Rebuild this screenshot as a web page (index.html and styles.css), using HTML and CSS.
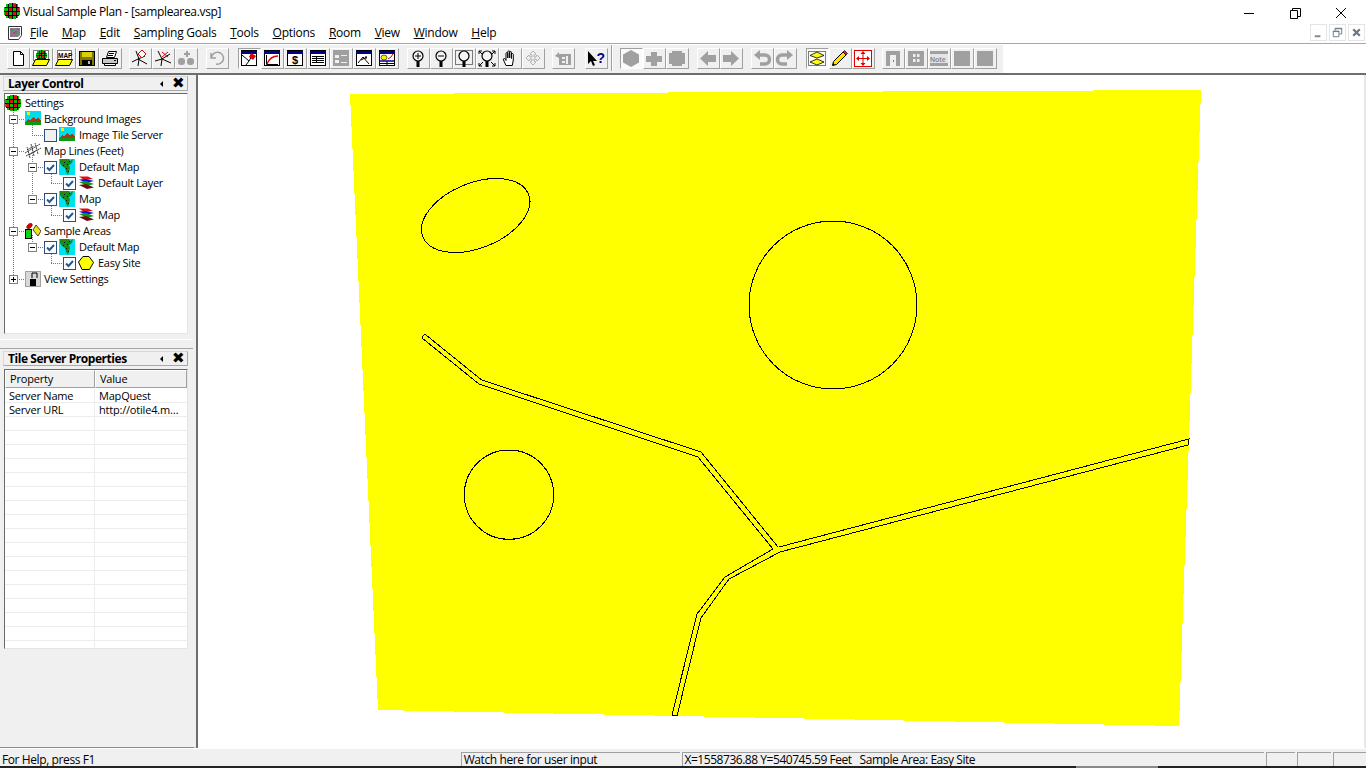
FILE: index.html
```html
<!DOCTYPE html>
<html lang="en">
<head>
<meta charset="utf-8">
<title>Visual Sample Plan - [samplearea.vsp]</title>
<link rel="stylesheet" href="styles.css">
</head>
<body>
<svg class="defs" width="0" height="0" aria-hidden="true">
  <defs>
    <symbol id="grid" viewBox="0 0 16 16">
      <g shape-rendering="crispEdges">
      <path fill="#00c000" d="M5 0h7v1h2v3h2v8h-2v3h-2v1H5v-1H2v-3H0V4h2V1h3z"/>
      <path fill="#e01010" d="M9 1h3v3H9zM5 5h3v3H5zM9 9h3v3H9zM13 5h2v3h-2zM1 9h3v3H1zM5 13h3v2H5z"/>
      <path fill="none" stroke="#000" d="M4.500 1v14M8.500 0v16M12.500 1v14M1 4.500h14M0 8.500h16M1 12.500h14"/>
      </g>
    </symbol>
    <symbol id="bg" viewBox="0 0 16 16">
      <g shape-rendering="crispEdges">
      <rect width="16" height="14" fill="#00dcec"/>
      <rect x="2" y="1" width="3" height="3" fill="#ffe800"/>
      <path fill="#a03a18" d="M0 11l3-3 2 1 3-3 3 2 2-1 3 3v2H0z"/>
      <rect y="11" width="16" height="3" fill="#0a9a10"/>
      </g>
    </symbol>
    <symbol id="lines" viewBox="0 0 16 16">
      <path fill="none" stroke="#111" stroke-width=".8" stroke-dasharray="2 .6" d="M0 10L15 1M1 13L16 5M5 15L2 4M9 13L6 1M13 11L10 0M2 7l7-4M4 12l7-4"/>
    </symbol>
    <symbol id="land" viewBox="0 0 16 16">
      <rect width="16" height="16" fill="#00e0f0"/>
      <path fill="#1a8a1a" d="M1 0h9l1 2 3-2-1 4-3 2 1 3-1 3-1 4-2-3-1-4-3-2-2-3z"/>
      <path fill="#000" d="M5 3h1v1H5zM8 5h1v1H8zM7 9h1v1H7zM4 6h1v1H4zM10 2h1v1h-1zM9 12h1v1H9z"/>
    </symbol>
    <symbol id="layers" viewBox="0 0 16 16">
      <path fill="#e01010" d="M1 1.500L10 1.500L15 4L6 5z"/>
      <path fill="#1010e0" d="M1 4.500L8 4L16 6L8 8z"/>
      <path fill="#0a9a1a" d="M1 7L8 6L16 9L9 11z"/>
      <path fill="#6e0c0c" d="M1 10L8 9L16 12.500L9 14z"/>
    </symbol>
    <symbol id="areas" viewBox="0 0 16 16">
      <ellipse cx="4.500" cy="3" rx="3.300" ry="2" transform="rotate(-45 4.500 3)" fill="#e00000" stroke="#700" stroke-width=".6"/>
      <rect x=".5" y="6.500" width="6" height="9" fill="#10d010" stroke="#000"/>
      <path d="M11 2l5 6-3 5-5-6z" fill="#f0e020" stroke="#000" stroke-width=".7"/>
    </symbol>
    <symbol id="pent" viewBox="0 0 16 16">
      <path d="M5 1.500h6l4.500 6-4 7H4L.5 7z" fill="#ffff00" stroke="#000"/>
    </symbol>
    <symbol id="view" viewBox="0 0 16 16">
      <rect x=".5" y=".5" width="15" height="15" fill="#d8d8d8" stroke="#555" stroke-dasharray="1 1"/>
      <path fill="#000" d="M5 8h6v7H5z"/>
      <path fill="none" stroke="#000" d="M7 7V2h5v5"/>
    </symbol>
    <symbol id="check" viewBox="0 0 13 13">
      <rect x=".5" y=".5" width="12" height="12" fill="#fff" stroke="#2a4f78"/>
      <path d="M3 6.500l2.500 2.500L10 4" fill="none" stroke="#1f5a96" stroke-width="2"/>
    </symbol>
    <symbol id="uncheck" viewBox="0 0 13 13">
      <rect x=".5" y=".5" width="12" height="12" fill="#f0f0f0" stroke="#2a4f78"/>
    </symbol>
    <symbol id="win" viewBox="0 0 18 17">
      <rect x="1.500" y=".5" width="15" height="15" fill="#fff" stroke="#000"/>
      <rect x="1" y="1" width="16" height="3" fill="#00008c"/>
    </symbol>
    <symbol id="mag" viewBox="0 0 18 17">
      <circle cx="9" cy="6" r="5" fill="#f4f4f4" stroke="#000" stroke-width="1.200"/>
      <rect x="7.500" y="11" width="3" height="6" fill="#000"/>
    </symbol>
  </defs>
</svg>

<header class="titlebar">
  <svg class="appicon"><use href="#grid"/></svg>
  <span class="apptitle">Visual Sample Plan - [samplearea.vsp]</span>
  <div class="caption">
    <svg class="capbtn" viewBox="0 0 46 16"><path d="M18 10.500h10" stroke="#000" fill="none"/></svg>
    <svg class="capbtn" viewBox="0 0 46 16"><path d="M18.500 7.500h7v8h-7zM20.500 7V5.500h8v8H26" stroke="#000" fill="none"/></svg>
    <svg class="capbtn" viewBox="0 0 46 16"><path d="M18 5l10 10M28 5L18 15" stroke="#000" fill="none"/></svg>
  </div>
</header>

<nav class="menubar">
  <svg class="docicon" viewBox="0 0 16 16">
    <path d="M1.500 1.500h13v9l-3 4h-10z" fill="#fff" stroke="#333"/>
    <path d="M3 3h10v7l-2 2H3z" fill="#8a7a90"/>
    <path d="M4 4h2v2H4zM8 6h2v2H8zM10 4h2v1h-2z" fill="#20a040"/>
    <path d="M6 7h2v2H6zM4 9h1v1H4z" fill="#d04060"/>
  </svg>
  <ul class="menus">
    <li><u>F</u>ile</li>
    <li><u>M</u>ap</li>
    <li><u>E</u>dit</li>
    <li><u>S</u>ampling Goals</li>
    <li><u>T</u>ools</li>
    <li><u>O</u>ptions</li>
    <li><u>R</u>oom</li>
    <li><u>V</u>iew</li>
    <li><u>W</u>indow</li>
    <li><u>H</u>elp</li>
  </ul>
  <div class="mdi">
    <svg class="mdibtn" viewBox="0 0 16 16"><path d="M4 11h6v2H4z" fill="#7a8694"/></svg>
    <svg class="mdibtn" viewBox="0 0 16 16"><path d="M3.500 6.500h6v6h-6zM5.500 6V3.500h7v6H10M3 7h7M5 4h8" fill="none" stroke="#6a7684"/></svg>
    <svg class="mdibtn" viewBox="0 0 16 16"><path d="M4.500 4.500l7 7M11.500 4.500l-7 7" stroke="#6a7684" stroke-width="2.400" fill="none"/></svg>
  </div>
</nav>

<div class="toolrow">
  <div class="toolbar">
    <div class="tgroup">
      <span class="tb"><svg class="ti" viewBox="0 0 18 17"><path d="M4.500 1.500h7l3 3v11h-10z" fill="#fff" stroke="#000"/><path d="M11.500 1.500v3h3" fill="none" stroke="#000"/></svg></span>
      <span class="tb"><svg class="ti" viewBox="0 0 18 17"><rect x="1.500" y=".5" width="15" height="10" fill="#fff" stroke="#000" stroke-dasharray="1 1"/><use href="#grid" x="4" y="0" width="11" height="11"/><path d="M.5 15.500l3-6h14l-3 6z" fill="#ffff00" stroke="#000"/></svg></span>
      <span class="tb"><svg class="ti" viewBox="0 0 18 17"><rect x="2.500" y=".5" width="14" height="9" fill="#fff" stroke="#000" stroke-dasharray="1 1"/><text x="3" y="8" class="icotext">MAP</text><path d="M.5 15.500l3-6h14l-3 6z" fill="#ffff00" stroke="#000"/></svg></span>
      <span class="tb"><svg class="ti" viewBox="0 0 18 17"><rect x="1.500" y="1.500" width="15" height="14" fill="#807800" stroke="#000"/><rect x="4" y="2" width="10" height="5" fill="#d8d000"/><rect x="4" y="10" width="10" height="5" fill="#000"/><rect x="10" y="11" width="2" height="3" fill="#bbb"/></svg></span>
      <span class="tb"><svg class="ti" viewBox="0 0 18 17"><path d="M5.500 7.500l2-6h8l-2 6z" fill="#fff" stroke="#000"/><path d="M1.500 8.500h15v5h-15z" fill="#c8c8c8" stroke="#000"/><path d="M3.500 13.500h11v2h-11z" fill="#fff" stroke="#000"/><path d="M8 3.500h5M7 5.500h5" stroke="#000"/><rect x="13" y="10" width="2" height="1" fill="#000"/></svg></span>
    </div>
    <div class="tgroup g7">
      <span class="tb"><svg class="ti" viewBox="0 0 18 17"><path d="M1 12l6-3 9 5M5 1l3 8-1 7M7 9l7-3" fill="none" stroke="#000"/><path d="M11 0l4 4-4 4-4-4z" fill="#fff" stroke="#e00000"/></svg></span>
      <span class="tb"><svg class="ti" viewBox="0 0 18 17"><path d="M1 11l7-2 9 4M4 1l4 8-1 7M8 9l8-5" fill="none" stroke="#000"/><path d="M8 2l6 5M14 2L8 7" fill="none" stroke="#e00000"/></svg></span>
      <span class="tb"><svg class="ti" viewBox="0 0 18 17"><rect x="1" y="8" width="7" height="7" rx="3" fill="#a0a0a0"/><rect x="10" y="8" width="7" height="7" rx="3" fill="#a0a0a0"/><path d="M7 3h2V1h2v2h2v2h-2v2H9V5H7z" fill="#a0a0a0"/></svg></span>
    </div>
    <div class="tgroup g8">
      <span class="tb"><svg class="ti" viewBox="0 0 18 17"><path d="M3 3v5h5M3.500 8A6 6 0 1 1 8 14" fill="none" stroke="#a0a0a0" stroke-width="1.500"/></svg></span>
    </div>
    <div class="tgroup g9">
      <span class="tb pressed"><svg class="ti" viewBox="0 0 18 17"><use href="#win"/><path d="M2 5l7 6-3 4M9 11l3-5" fill="none" stroke="#000"/><path d="M11 3l5 3-3 4-4-3z" fill="#e00000"/></svg></span>
      <span class="tb"><svg class="ti" viewBox="0 0 18 17"><use href="#win"/><path d="M3.500 5v9.500H15" fill="none" stroke="#000"/><path d="M4 14C6 9 10 6 15 6" fill="none" stroke="#e00000" stroke-width="1.300"/></svg></span>
      <span class="tb"><svg class="ti" viewBox="0 0 18 17"><use href="#win"/><text x="9" y="14" class="icotext dollar">$</text></svg></span>
      <span class="tb"><svg class="ti" viewBox="0 0 18 17"><use href="#win"/><path d="M3 6.500h12M3 8.500h12M3 10.500h12M3 12.500h12M7.500 6v7" fill="none" stroke="#000"/></svg></span>
      <span class="tb"><svg class="ti" viewBox="0 0 18 17"><rect x="1" y="0" width="16" height="16" fill="#a0a0a0"/><path d="M3 5h4v3H3zM3 10h4v3H3zM9 5h6v1H9zM9 12h6v1H9z" fill="#f0f0f0"/></svg></span>
      <span class="tb"><svg class="ti" viewBox="0 0 18 17"><use href="#win"/><path d="M3 13l5-6 6 7M6 10l6-3M11 6v3" fill="none" stroke="#000"/></svg></span>
      <span class="tb"><svg class="ti" viewBox="0 0 18 17"><use href="#win"/><ellipse cx="6" cy="7.500" rx="3" ry="2.500" fill="#ffee00" stroke="#000" stroke-width=".6"/><path d="M10 9l3-2 2-3" stroke="#e00000" fill="none"/><path d="M2 11h14" stroke="#00008c" stroke-width="1.500"/><path d="M2 13.500h14M9 11v4" stroke="#000"/></svg></span>
    </div>
    <div class="tgroup g8">
      <span class="tb"><svg class="ti" viewBox="0 0 18 17"><use href="#mag"/><path d="M6 6h6M9 3v6" stroke="#000"/></svg></span>
      <span class="tb"><svg class="ti" viewBox="0 0 18 17"><use href="#mag"/><path d="M6 6h6" stroke="#000"/></svg></span>
      <span class="tb"><svg class="ti" viewBox="0 0 18 17"><rect x=".5" y=".5" width="17" height="14" fill="none" stroke="#000" stroke-dasharray="1 1"/><use href="#mag"/></svg></span>
      <span class="tb"><svg class="ti" viewBox="0 0 18 17"><use href="#mag"/><path d="M1 1l3 3M1 1h3M1 1v3M17 1l-3 3M17 1h-3M17 1v3M1 16l4-4M1 16h3M1 16v-3M17 16l-4-4M17 16h-3M17 16v-3" fill="none" stroke="#000"/></svg></span>
      <span class="tb"><svg class="ti" viewBox="0 0 18 17"><path d="M5 15.500L2.500 10c-.7-1.500 1-2 1.700-.8L5 10.500V3.500c0-1.300 1.800-1.300 1.800 0V8V1.800c0-1.300 1.900-1.300 1.900 0V8V2.500c0-1.300 1.800-1.300 1.800 0V8.500V4.500c0-1.200 1.800-1.200 1.800 0V10l-1 5.500z" fill="#fff" stroke="#000"/></svg></span>
      <span class="tb"><svg class="ti" viewBox="0 0 18 17"><path d="M9 1l3 3-2 1v2h2l1-2 3 3-3 3-1-2h-2v2l2 1-3 3-3-3 2-1v-2H6l-1 2-3-3 3-3 1 2h2V5L6 4z" fill="none" stroke="#b0b0b0"/></svg></span>
    </div>
    <div class="tgroup g7">
      <span class="tb"><svg class="ti" viewBox="0 0 18 17"><path d="M1 6l4-4v2h12v11H5V8z" fill="#a0a0a0"/><path d="M8 7h3v2H8zM12 6h2v8h-2zM8 11h3v2H8z" fill="#f0f0f0"/></svg></span>
    </div>
    <div class="tgroup g10">
      <span class="tb"><svg class="ti" viewBox="0 0 18 17"><path d="M1 1v13l3-3 2 5 2-1-2-4h4z" fill="#000"/><text x="9.500" y="13" class="icotext help">?</text></svg></span>
    </div>
    <i class="tsep"></i>
    <div class="tgroup">
      <span class="tb pressed"><svg class="ti" viewBox="0 0 18 17"><path d="M9 0l8 4.500v8L9 17l-8-4.500v-8z" fill="#a0a0a0"/></svg></span>
      <span class="tb"><svg class="ti" viewBox="0 0 18 17"><path d="M6 2h6v4h5v6h-5v4H6v-4H1V6h5z" fill="#a0a0a0"/></svg></span>
      <span class="tb"><svg class="ti" viewBox="0 0 18 17"><path d="M4 1h10v2h3v11h-3v2H4v-2H1V3h3z" fill="#a0a0a0"/></svg></span>
    </div>
    <div class="tgroup g8">
      <span class="tb"><svg class="ti" viewBox="0 0 18 17"><path d="M1 8.500L9 1v4h8v7H9v4z" fill="#a0a0a0"/></svg></span>
      <span class="tb"><svg class="ti" viewBox="0 0 18 17"><path d="M17 8.500L9 1v4H1v7h8v4z" fill="#a0a0a0"/></svg></span>
    </div>
    <div class="tgroup g8">
      <span class="tb"><svg class="ti" viewBox="0 0 18 17"><path d="M5 5h7a4 4 0 0 1 0 9H7" fill="none" stroke="#a0a0a0" stroke-width="3.500"/><path d="M1 5l6-5v10z" fill="#a0a0a0"/></svg></span>
      <span class="tb"><svg class="ti" viewBox="0 0 18 17"><path d="M13 5H6a4 4 0 0 0 0 9h5" fill="none" stroke="#a0a0a0" stroke-width="3.500"/><path d="M17 5l-6-5v10z" fill="#a0a0a0"/></svg></span>
    </div>
    <div class="tgroup g9">
      <span class="tb pressed"><svg class="ti" viewBox="0 0 18 17"><rect x=".5" y="1.500" width="17" height="14" fill="none" stroke="#000" stroke-dasharray="1 1"/><path d="M9 2l7 3.500L9 8 2 5.500z" fill="#ffff00" stroke="#000" stroke-width=".8"/><path d="M9 9l7 3-7 3-7-3z" fill="#ffff00" stroke="#000" stroke-width=".8"/></svg></span>
      <span class="tb"><svg class="ti" viewBox="0 0 18 17"><path d="M1.500 15.500l1-4L12 2l3 3-9.500 9.500z" fill="#ffe000" stroke="#000"/><path d="M12 2l1.500-1.500 3 3L15 5z" fill="#e02050" stroke="#000" stroke-width=".7"/><path d="M1.500 15.500l.7-2.500 1.800 1.800z" fill="#000"/></svg></span>
      <span class="tb"><svg class="ti" viewBox="0 0 18 17"><rect x=".5" y=".5" width="17" height="16" fill="#fff" stroke="#e00000"/><path d="M9 3v11M3.500 8.500h11" stroke="#e00000" fill="none"/><path d="M9 1l2.500 3h-5zM9 16l-2.500-3h5zM2 8.500l3-2.500v5zM16 8.500L13 6v5z" fill="#e00000"/></svg></span>
    </div>
    <div class="tgroup g7">
      <span class="tb"><svg class="ti" viewBox="0 0 18 17"><path d="M2 1h14v15h-4V5H6v11H2z" fill="#a0a0a0"/><rect x="9" y="10" width="1" height="2" fill="#777"/></svg></span>
      <span class="tb"><svg class="ti" viewBox="0 0 18 17"><path d="M1 1h16v15H1z" fill="#a0a0a0"/><path d="M6 4h2.500v3H6zM10 4h2.500v3H10zM6 9h2.500v3H6zM10 9h2.500v3H10z" fill="#f0f0f0"/></svg></span>
      <span class="tb"><svg class="ti" viewBox="0 0 18 17"><path d="M0 1h18v15H0z" fill="#a0a0a0"/><rect y="4" width="18" height="9" fill="#e4e4e4"/><text x="0" y="11.500" class="icotext note">Note</text></svg></span>
      <span class="tb"><svg class="ti" viewBox="0 0 18 17"><path d="M1 1h16v15H1z" fill="#a0a0a0"/></svg></span>
      <span class="tb"><svg class="ti" viewBox="0 0 18 17"><path d="M1 1h16v15H1z" fill="#a0a0a0"/></svg></span>
    </div>
  </div>
</div>

<main class="workspace">
  <aside class="side">
    <section class="pane">
      <div class="panetitle"><span>Layer Control</span><i class="arrow"></i><b class="closex">✖</b></div>
      <div class="tree">
        <svg class="dots" width="182" height="238" viewBox="5 94 182 238">
          <path d="M13.500 108V275M17 119.500h8M17 151.500h8M17 231.500h8M17 279.500h8M32.500 123v12M32 135.500h12M32.500 155v44M36 167.500h8M36 199.500h8M32.500 235v12M36 247.500h8M51.500 172v11M51 183.500h12M51.500 204v11M51 215.500h12M51.500 252v11M51 263.500h12" fill="none" stroke="#777" stroke-dasharray="1 1"/>
        </svg>
        <div class="row lv0"><svg class="ic"><use href="#grid"/></svg><span class="lbl">Settings</span></div>
        <div class="row lv1"><i class="exp"></i><svg class="ic"><use href="#bg"/></svg><span class="lbl">Background Images</span></div>
        <div class="row lv2"><i class="exp none"></i><svg class="cb"><use href="#uncheck"/></svg><svg class="ic"><use href="#bg"/></svg><span class="lbl">Image Tile Server</span></div>
        <div class="row lv1"><i class="exp"></i><svg class="ic"><use href="#lines"/></svg><span class="lbl">Map Lines (Feet)</span></div>
        <div class="row lv2"><i class="exp"></i><svg class="cb"><use href="#check"/></svg><svg class="ic"><use href="#land"/></svg><span class="lbl">Default Map</span></div>
        <div class="row lv3"><svg class="cb"><use href="#check"/></svg><svg class="ic"><use href="#layers"/></svg><span class="lbl">Default Layer</span></div>
        <div class="row lv2"><i class="exp"></i><svg class="cb"><use href="#check"/></svg><svg class="ic"><use href="#land"/></svg><span class="lbl">Map</span></div>
        <div class="row lv3"><svg class="cb"><use href="#check"/></svg><svg class="ic"><use href="#layers"/></svg><span class="lbl">Map</span></div>
        <div class="row lv1"><i class="exp"></i><svg class="ic"><use href="#areas"/></svg><span class="lbl">Sample Areas</span></div>
        <div class="row lv2"><i class="exp"></i><svg class="cb"><use href="#check"/></svg><svg class="ic"><use href="#land"/></svg><span class="lbl">Default Map</span></div>
        <div class="row lv3"><svg class="cb"><use href="#check"/></svg><svg class="ic"><use href="#pent"/></svg><span class="lbl">Easy Site</span></div>
        <div class="row lv1"><i class="exp plus"></i><svg class="ic"><use href="#view"/></svg><span class="lbl">View Settings</span></div>
      </div>
    </section>
    <div class="split"></div>
    <section class="pane">
      <div class="panetitle"><span>Tile Server Properties</span><i class="arrow"></i><b class="closex">✖</b></div>
      <div class="props">
        <div class="phead"><span>Property</span><span>Value</span></div>
        <div class="prow"><span>Server Name</span><span>MapQuest</span></div>
        <div class="prow"><span>Server URL</span><span>http://otile4.m…</span></div>
        <div class="prow"><span></span><span></span></div>
        <div class="prow"><span></span><span></span></div>
        <div class="prow"><span></span><span></span></div>
        <div class="prow"><span></span><span></span></div>
        <div class="prow"><span></span><span></span></div>
        <div class="prow"><span></span><span></span></div>
        <div class="prow"><span></span><span></span></div>
        <div class="prow"><span></span><span></span></div>
        <div class="prow"><span></span><span></span></div>
        <div class="prow"><span></span><span></span></div>
        <div class="prow"><span></span><span></span></div>
        <div class="prow"><span></span><span></span></div>
        <div class="prow"><span></span><span></span></div>
        <div class="prow"><span></span><span></span></div>
        <div class="prow"><span></span><span></span></div>
        <div class="prow"><span></span><span></span></div>
        <div class="prow"><span></span><span></span></div>
      </div>
    </section>
  </aside>
  <div class="view">
    <svg class="map" width="1166" height="672" viewBox="198 75 1166 672">
      <path class="area" d="M350 94L1201 90L1179 726L378 710Z"/>
      <g class="ink">
        <ellipse cx="475.700" cy="215.500" rx="57" ry="32.500" transform="rotate(-22 475.700 215.500)"/>
        <circle cx="833" cy="305" r="84"/>
        <circle cx="509" cy="494.700" r="44.700"/>
        <path d="M773 549L698 457L479 384L422 338Q423 334 426 335L481.700 380L701 452L778 547"/>
        <path d="M773 549L725 577L697 614L672 715L677 716L701 618L729 579L780 552L1188 445L1189 439L779 547"/>
      </g>
    </svg>
  </div>
</main>

<footer class="statusbar">
  <span class="st st1">For Help, press F1</span>
  <span class="st st2">Watch here for user input</span>
  <span class="st st3">X=1558736.88 Y=540745.59 Feet&nbsp;&nbsp; Sample Area: Easy Site</span>
  <span class="st st4"></span>
  <span class="st st5"></span>
  <span class="st st6"></span>
</footer>
<div class="taskedge"><i></i></div>
</body>
</html>
```
FILE: styles.css
```css
* { box-sizing: border-box; }
html, body { margin: 0; padding: 0; height: 768px; overflow: hidden; }
body {
  width: 1366px;
  background: #f0f0f0;
  color: #000;
  font-family: "Open Sans", "Noto Sans", sans-serif;
  font-size: 11px;
  display: flex;
  flex-direction: column;
}
.defs { position: absolute; }

/* title bar */
.titlebar { height: 22px; background: #fff; display: flex; align-items: center; padding-left: 4px; flex: none; }
.appicon { width: 16px; height: 16px; flex: none; }
.apptitle { margin-left: 3px; font-size: 12px; letter-spacing: -.34px; }
.caption { margin-left: auto; margin-right: 2px; display: flex; }
.capbtn { width: 46px; height: 16px; display: block; }

/* menu bar */
.menubar { height: 21px; background: #fff; display: flex; align-items: center; padding-left: 7px; flex: none; border-bottom: 0; }
.docicon { width: 16px; height: 16px; flex: none; }
.menus { list-style: none; margin: 0 0 0 7px; padding: 0; display: flex; gap: 13.800px; font-size: 12px; letter-spacing: -.25px; }
.mdi { margin-left: auto; display: flex; gap: 2px; padding-right: 1px; }
.mdibtn { width: 17px; height: 17px; border: 1px solid #e4e4e4; background: #fff; display: block; }

/* toolbar */
.toolrow { height: 32px; flex: none; background: #fff; border-top: 1px solid #a8a8a8; border-bottom: 2px solid #6e6e6e; }
.toolbar { width: 1003px; height: 29px; background: #f0f0f0; border-top: 1px solid #fff; display: flex; align-items: flex-start; padding: 3px 0 0 7px; }
.tgroup { display: flex; }
.g7 { margin-left: 7px; }
.g8 { margin-left: 8px; }
.g9 { margin-left: 9px; }
.g10 { margin-left: 10px; }
.tsep { width: 2px; height: 26px; margin: -3px 7px 0 3px; border-left: 1px solid #a0a0a0; border-right: 1px solid #fff; }
.tb { width: 23px; height: 21px; display: flex; align-items: center; justify-content: center; padding-right: 2px; background: #f0f0f0; border: 1px solid; border-color: #fff #a0a0a0 #a0a0a0 #fff; }
.tb.pressed { background: #fafafa; border-color: #a0a0a0 #fff #fff #a0a0a0; }
.ti { width: 18px; height: 17px; display: block; overflow: visible; flex: none; }
.icotext { font-family: "Liberation Sans", sans-serif; font-size: 6.500px; font-weight: 700; fill: #000; }
.dollar { font-size: 11px; text-anchor: middle; }
.help { font-size: 14px; fill: #00008c; }
.note { font-size: 7px; fill: #8a8a8a; }

/* workspace */
.workspace { flex: 1; min-height: 0; display: flex; }
.side { width: 196px; flex: none; padding: 1px 5px 0 3px; border-bottom: 1px solid #8a8a8a; border-right: 3px solid #f0f0f0; }
.pane { display: flex; flex-direction: column; }
.panetitle { height: 15px; display: flex; align-items: center; padding: 0 4px; background: #f0f0f0; border: 1px solid; border-color: #d8d8d8 #a8a8a8 #a8a8a8 #d8d8d8; }
.panetitle span { font-weight: 700; font-size: 12px; letter-spacing: -.45px; flex: 1; padding-bottom: 1px; }
.arrow { width: 0; height: 0; border: 3px solid transparent; border-left: 0; border-right: 3px solid #000; margin-right: 9px; }
.closex { font: 700 15px/13px "DejaVu Sans", sans-serif; width: 11px; text-align: center; }

/* tree */
.tree { position: relative; margin: 2px 0 0 1px; width: 184px; height: 241px; background: #fff; border: 1px solid; border-color: #696969 #e4e4e4 #e4e4e4 #696969; padding-top: 1px; }
.dots { position: absolute; left: 0; top: 0; display: block; }
.row { position: relative; height: 16px; display: flex; align-items: center; white-space: nowrap; }
.lv0 { padding-left: 0; }
.lv1 { padding-left: 4px; }
.lv2 { padding-left: 23px; }
.lv3 { padding-left: 58px; }
.exp { width: 9px; height: 9px; flex: none; border: 1px solid #808080; background: #fff; margin-right: 7px; position: relative; }
.exp::before { content: ""; position: absolute; left: 1px; top: 3px; width: 5px; height: 1px; background: #000; }
.exp.plus::after { content: ""; position: absolute; left: 3px; top: 1px; width: 1px; height: 5px; background: #000; }
.exp.none { visibility: hidden; }
.ic { width: 16px; height: 16px; flex: none; }
.cb { width: 13px; height: 13px; flex: none; margin-right: 2px; }
.lbl { margin-left: 4px; letter-spacing: -.25px; padding-bottom: 2px; }
.lv1 .lbl { margin-left: 3px; }

/* splitter */
.split { height: 15px; margin: 0 -5px 2px -3px; position: relative; border-bottom: 1px solid #a8a8a8; }
.split::before { content: ""; position: absolute; left: 0; right: 0; top: 5px; border-top: 1px solid #fff; }

/* property grid */
.props { margin: 3px 0 0 1px; width: 184px; height: 280px; background: #fff; overflow: hidden; border: 1px solid; border-color: #696969 #e4e4e4 #e4e4e4 #696969; }
.phead { height: 18px; display: grid; grid-template-columns: 90px 1fr; background: #f0f0f0; margin-bottom: 1px; }
.phead span { padding-left: 4px; line-height: 15px; letter-spacing: -.2px; border: 1px solid; border-color: #fff #a0a0a0 #a0a0a0 #fff; }
.prow { height: 14px; display: grid; grid-template-columns: 90px 1fr; border-bottom: 1px solid #ececec; }
.prow span { padding-left: 4px; line-height: 13px; letter-spacing: -.2px; border-right: 1px solid #ececec; white-space: nowrap; overflow: hidden; }
.prow span:last-child { border-right: 0; }

/* map view */
.view { flex: 1; min-width: 0; background: #fff; border-left: 2px solid #6e6e6e; border-right: 2px solid #e8e8e8; }
.map { display: block; }
.area { fill: #ffff00; shape-rendering: crispEdges; }
.ink ellipse, .ink circle, .ink path { fill: none; stroke: #000; stroke-width: 1; shape-rendering: crispEdges; }

/* status bar */
.statusbar { height: 18px; flex: none; display: flex; background: #f0f0f0; padding-top: 3px; border-top: 1px solid #fff; }
.st { display: block; height: 15px; line-height: 13px; font-size: 12px; white-space: nowrap; letter-spacing: -.4px; border-top: 1px solid #a0a0a0; border-left: 1px solid #a0a0a0; padding-left: 2px; margin-right: 2px; }
.st1 { width: 459px; border-color: transparent; padding-left: 1px; }
.st2 { width: 219px; }
.st3 { width: 583px; letter-spacing: -.46px; }
.st4 { width: 29px; }
.st5 { width: 34px; }
.st6 { width: 33px; margin-right: 0; }
.taskedge { height: 2px; flex: none; background: #222; position: relative; }
.taskedge i { display: block; height: 2px; width: 82px; margin-left: 1076px; background: #888; }
```
